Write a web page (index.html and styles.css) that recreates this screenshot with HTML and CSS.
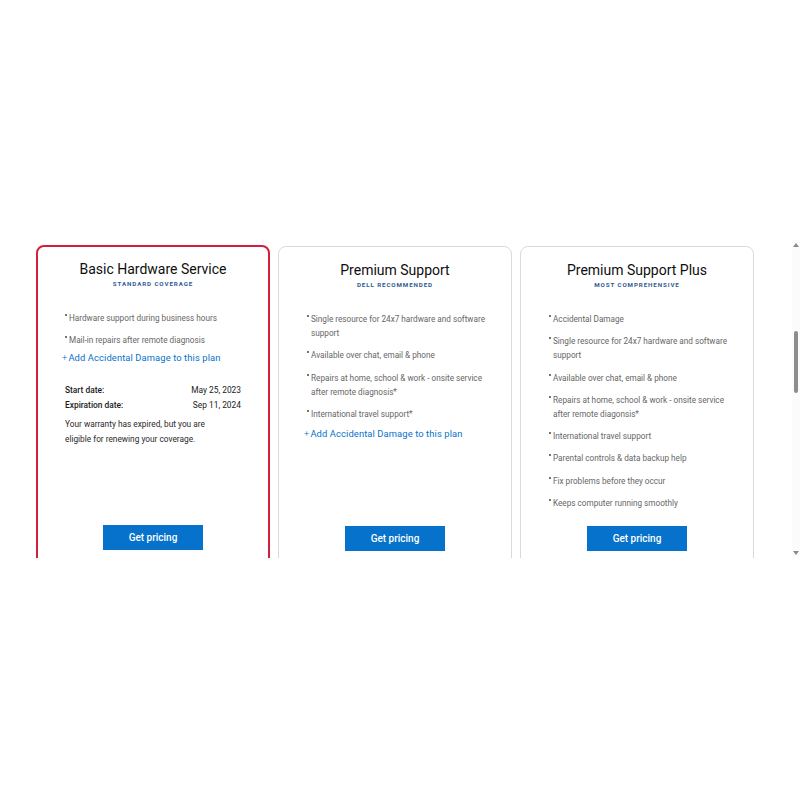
FILE: index.html
```html
<!DOCTYPE html>
<html>
<head>
<meta charset="utf-8">
<link rel="stylesheet" href="styles.css">
</head>
<body>
<div class="frame">
  <div class="viewport">
    <div class="cards">
      <section class="card card-active">
        <h2 class="title">Basic Hardware Service</h2>
        <p class="tag">STANDARD COVERAGE</p>
        <ul class="features">
          <li>Hardware support during business hours</li>
          <li>Mail-in repairs after remote diagnosis</li>
        </ul>
        <a class="add-link"><span class="plus">+</span>Add Accidental Damage to this plan</a>
        <dl class="dates">
          <div class="date-row"><dt>Start date:</dt><dd>May 25, 2023</dd></div>
          <div class="date-row"><dt>Expiration date:</dt><dd>Sep 11, 2024</dd></div>
        </dl>
        <p class="note">Your warranty has expired, but you are eligible for renewing your coverage.</p>
        <div class="spacer"></div>
        <button class="btn">Get pricing</button>
      </section>
      <section class="card">
        <h2 class="title">Premium Support</h2>
        <p class="tag">DELL RECOMMENDED</p>
        <ul class="features">
          <li>Single resource for 24x7 hardware and software support</li>
          <li>Available over chat, email &amp; phone</li>
          <li>Repairs at home, school &amp; work - onsite service after remote diagnosis*</li>
          <li>International travel support*</li>
        </ul>
        <a class="add-link"><span class="plus">+</span>Add Accidental Damage to this plan</a>
        <div class="spacer"></div>
        <button class="btn">Get pricing</button>
      </section>
      <section class="card">
        <h2 class="title">Premium Support Plus</h2>
        <p class="tag">MOST COMPREHENSIVE</p>
        <ul class="features">
          <li>Accidental Damage</li>
          <li>Single resource for 24x7 hardware and software support</li>
          <li>Available over chat, email &amp; phone</li>
          <li>Repairs at home, school &amp; work - onsite service after remote diagonsis*</li>
          <li>International travel support</li>
          <li>Parental controls &amp; data backup help</li>
          <li>Fix problems before they occur</li>
          <li>Keeps computer running smoothly</li>
        </ul>
        <div class="spacer"></div>
        <button class="btn">Get pricing</button>
      </section>
    </div>
  </div>
  <div class="scrollbar">
    <span class="arrow arrow-up"></span>
    <div class="track"><div class="thumb"></div></div>
    <span class="arrow arrow-down"></span>
  </div>
</div>
</body>
</html>
```

FILE: styles.css
```css
html, body {
  margin: 0;
  padding: 0;
  background: #ffffff;
  font-family: Roboto, "Liberation Sans", Arial, sans-serif;
}

.frame {
  margin-top: 240px;
  height: 318px;
  display: flex;
  padding-left: 36px;
}

.viewport {
  flex: 1;
  overflow: hidden;
  padding-top: 5px;
}

.cards {
  display: flex;
  gap: 8px;
  align-items: stretch;
}

.card {
  width: 234px;
  box-sizing: border-box;
  min-height: 330px;
  border: 1px solid #dadada;
  border-radius: 8px;
  padding: 14px 22px 0 25px;
  margin-top: 1px;
  display: flex;
  flex-direction: column;
  background: #fff;
}

.card-active {
  border: 2px solid #d3203a;
  padding: 13px 21px 0 24px;
  margin-top: 0;
}

.title {
  margin: 0;
  text-align: center;
  font-weight: 400;
  font-size: 14px;
  line-height: 18px;
  color: #0e0e0e;
  padding-right: 3px;
}

.tag {
  margin: 2px 0 0;
  text-align: center;
  font-size: 6.2px;
  font-weight: 700;
  letter-spacing: 0.9px;
  color: #2f5a94;
  line-height: 9px;
  padding-right: 3px;
}

.features {
  list-style: none;
  margin: 22px 0 0;
  padding: 0 0 0 3px;
}

.features li {
  font-size: 8.2px;
  line-height: 14px;
  color: #666;
  font-weight: 400;
  padding-left: 4px;
  position: relative;
  margin-bottom: 8.25px;
}

.features li::before {
  content: "";
  position: absolute;
  left: 0;
  top: 3px;
  width: 2px;
  height: 2px;
  border-radius: 50%;
  background: #444;
}

.card-active .features li:last-child {
  margin-bottom: 6px;
}

.add-link {
  display: block;
  margin-top: -2px;
  font-size: 9.4px;
  line-height: 14px;
  color: #0672cb;
  letter-spacing: 0.1px;
}

.plus {
  font-weight: 300;
  margin-right: 1px;
}

.dates {
  margin: 18px 0 0;
  padding: 0 6px 0 3px;
}

.date-row {
  display: flex;
  justify-content: space-between;
  font-size: 8.4px;
  line-height: 15px;
  color: #1a1a1a;
}

.date-row dt {
  font-weight: 500;
}

.date-row dd {
  margin: 0;
}

.note {
  margin: 4px 0 0;
  padding-left: 3px;
  font-size: 8.3px;
  line-height: 15px;
  color: #2a2a2a;
  width: 150px;
}

.spacer {
  flex: 1;
}

.btn {
  align-self: center;
  width: 100px;
  height: 25px;
  border: none;
  background: #0672cb;
  color: #fff;
  font-family: Roboto, "Liberation Sans", Arial, sans-serif;
  font-size: 10px;
  font-weight: 500;
  margin-bottom: 24px;
  margin-right: 3px;
  padding: 0;
}

.scrollbar {
  width: 8px;
  margin-left: 30px;
  display: flex;
  flex-direction: column;
  align-items: center;
  background: #fbfbfb;
  padding: 3px 0;
}

.arrow {
  width: 0;
  height: 0;
  border-left: 3px solid transparent;
  border-right: 3px solid transparent;
}

.arrow-up {
  border-bottom: 4px solid #8a8a8a;
}

.arrow-down {
  border-top: 4px solid #8a8a8a;
}

.track {
  flex: 1;
  width: 100%;
  display: flex;
  justify-content: center;
  padding-top: 84px;
}

.thumb {
  width: 4px;
  height: 62px;
  border-radius: 2px;
  background: #8d8d8d;
}
```
